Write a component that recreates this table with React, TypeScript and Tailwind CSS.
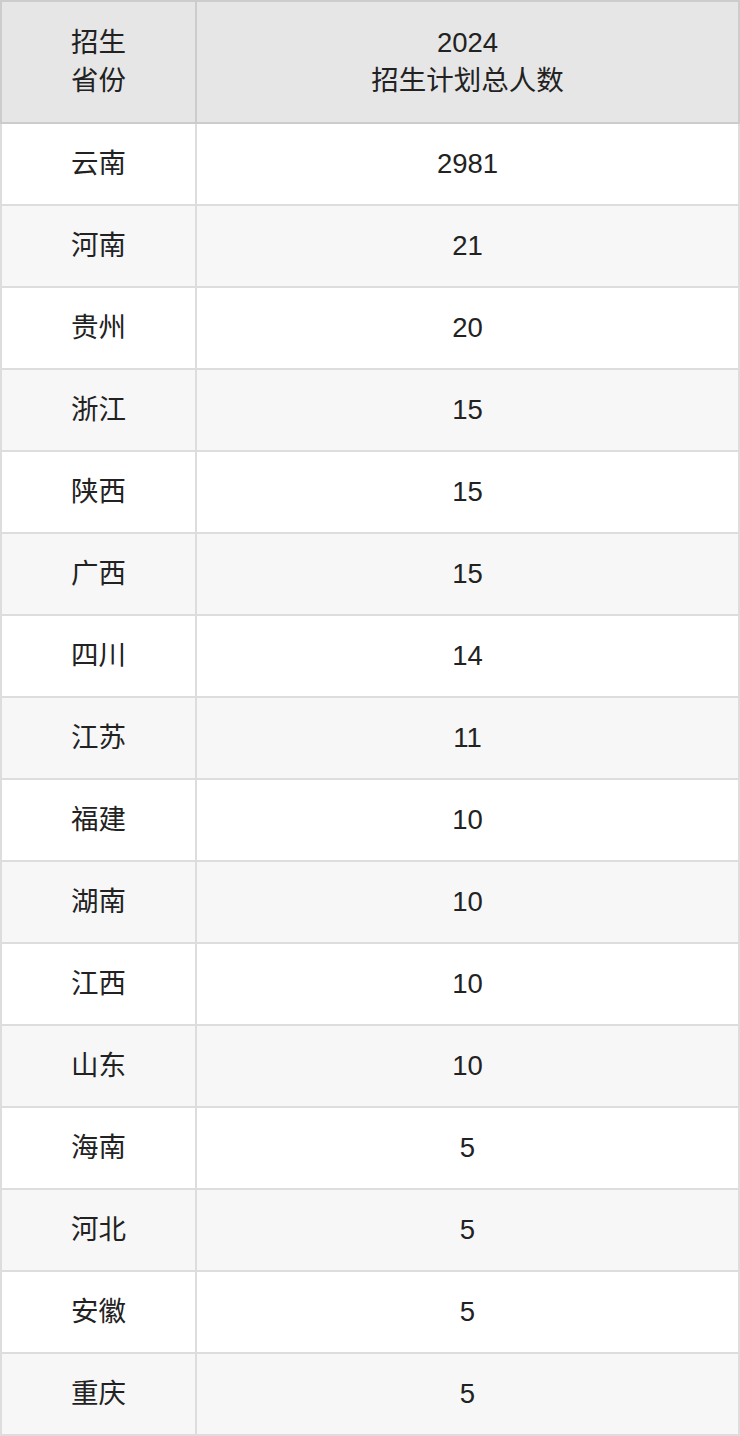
const rows: [string, string][] = [
  ["云南", "2981"],
  ["河南", "21"],
  ["贵州", "20"],
  ["浙江", "15"],
  ["陕西", "15"],
  ["广西", "15"],
  ["四川", "14"],
  ["江苏", "11"],
  ["福建", "10"],
  ["湖南", "10"],
  ["江西", "10"],
  ["山东", "10"],
  ["海南", "5"],
  ["河北", "5"],
  ["安徽", "5"],
  ["重庆", "5"],
]

export default function App() {
  return (
    <div className="w-[740px] bg-white font-['Liberation_Sans','Noto_Sans_CJK_SC',sans-serif] text-[27.5px] leading-[38px] text-[#222]">
      <table className="w-full table-fixed border-collapse border-2 border-[#d4d4d4]">
        <colgroup>
          <col className="w-[195px]" />
          <col />
        </colgroup>
        <thead>
          <tr className="h-[122px] bg-[#e6e6e6]">
            <th className="border-2 border-[#cccccc] font-normal">
              招生
              <br />
              省份
            </th>
            <th className="border-2 border-[#cccccc] font-normal">
              2024
              <br />
              招生计划总人数
            </th>
          </tr>
        </thead>
        <tbody>
          {rows.map(([province, total], i) => (
            <tr
              key={province}
              className={i % 2 === 0 ? "h-[82px] bg-white" : "h-[82px] bg-[#f7f7f7]"}
            >
              <td className="border-2 border-[#dddddd] text-center">{province}</td>
              <td className="border-2 border-[#dddddd] text-center">{total}</td>
            </tr>
          ))}
        </tbody>
      </table>
    </div>
  )
}
